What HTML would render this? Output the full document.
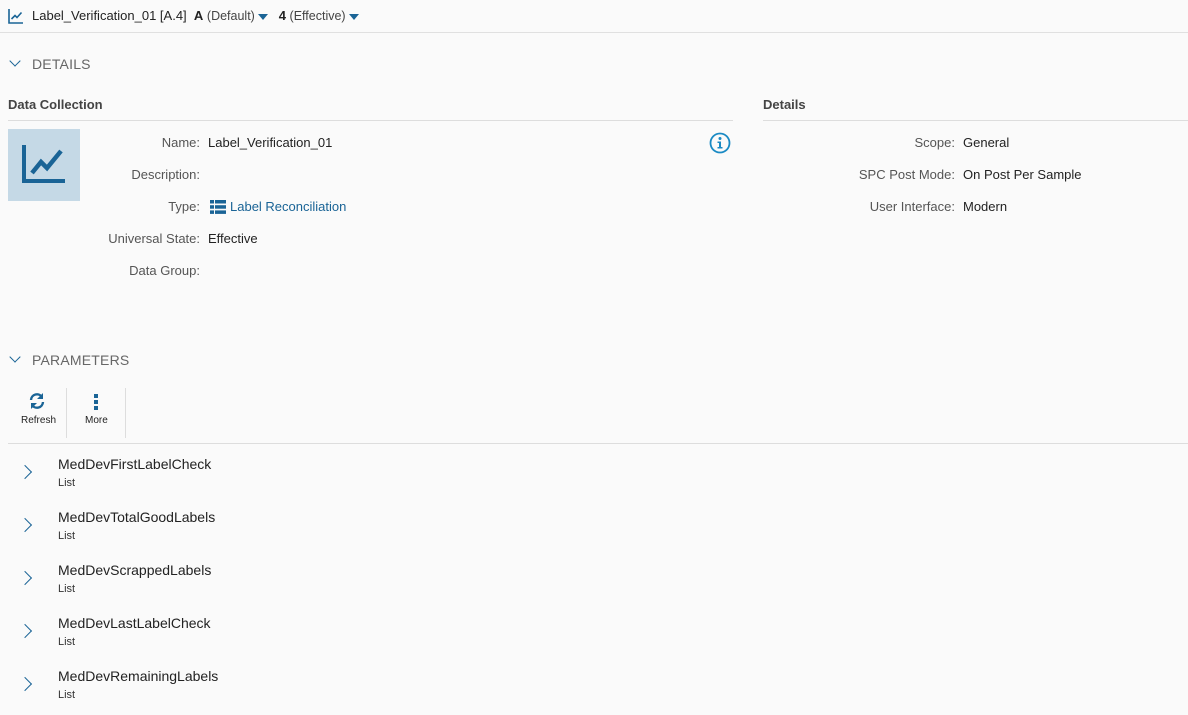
<!DOCTYPE html>
<html><head><style>
body{margin:0;width:1188px;height:715px;background:#fafafa;font-family:"Liberation Sans",sans-serif;color:#222;position:relative;overflow:hidden}
.a{position:absolute;white-space:nowrap}
.lbl{color:#555;font-size:13px;text-align:right;width:200px}
.val{font-size:13px;color:#222}
.blue{color:#1a6496}
.sec{color:#666;font-size:14px;letter-spacing:.2px}
.chev{position:absolute;width:7px;height:7px;border-right:1.5px solid #1a6496;border-bottom:1.5px solid #1a6496;transform:rotate(45deg)}
.rchev{position:absolute;width:9px;height:9px;border-right:1.8px solid #1a6496;border-top:1.8px solid #1a6496;transform:rotate(45deg)}
.pn{font-size:14px;color:#222}
.ps{font-size:11px;color:#333}
.tri{display:inline-block;width:0;height:0;border-left:5px solid transparent;border-right:5px solid transparent;border-top:6px solid #1a6496;vertical-align:middle;margin-left:3px}
</style></head><body>
<div class="a" style="left:0;top:0;width:1188px;height:32px;background:#fafafa;border-bottom:1px solid #e0e0e0"></div>
<svg class="a" style="left:8px;top:8px" width="16" height="16" viewBox="0 0 16 16"><path d="M1 1V15H15" fill="none" stroke="#1a6496" stroke-width="1.6"/><path d="M3.5 11L7 7.5L9 9.5L13.5 4.5" fill="none" stroke="#1a6496" stroke-width="1.6"/></svg>
<div class="a" style="left:32px;top:8px;font-size:13px">Label_Verification_01 [A.4]&nbsp;&nbsp;<b>A</b> <span style="color:#444;font-size:12.5px">(Default)</span><span class="tri"></span>&nbsp;&nbsp;&nbsp;<b>4</b> <span style="color:#444;font-size:12.5px">(Effective)</span><span class="tri"></span></div>

<div class="chev" style="left:11px;top:57px"></div>
<div class="a sec" style="left:32px;top:56px">DETAILS</div>
<div class="a" style="left:8px;top:97px;font-size:13px;font-weight:bold;color:#444">Data Collection</div>
<div class="a" style="left:8px;top:120px;width:725px;border-top:1px solid #ddd"></div>
<div class="a" style="left:763px;top:97px;font-size:13px;font-weight:bold;color:#444">Details</div>
<div class="a" style="left:763px;top:120px;width:425px;border-top:1px solid #ddd"></div>

<div class="a" style="left:8px;top:129px;width:72px;height:72px;background:#c5d9e6"></div>
<svg class="a" style="left:22px;top:142px" width="44" height="44" viewBox="0 0 44 44"><path d="M2 3V39H43" fill="none" stroke="#1a6496" stroke-width="4"/><path d="M10 31L19 20L25 26L39 9" fill="none" stroke="#1a6496" stroke-width="4.5"/></svg>

<div class="a lbl" style="left:0;top:135px">Name:</div><div class="a val" style="left:208px;top:135px">Label_Verification_01</div>
<div class="a lbl" style="left:0;top:167px">Description:</div>
<div class="a lbl" style="left:0;top:199px">Type:</div>
<svg class="a" style="left:210px;top:199px" width="16" height="16" viewBox="0 0 16 16" fill="#1a6496"><rect x="0" y="1" width="4" height="3.5"/><rect x="5" y="1" width="11" height="3.5"/><rect x="0" y="6.2" width="4" height="3.5"/><rect x="5" y="6.2" width="11" height="3.5"/><rect x="0" y="11.4" width="4" height="3.5"/><rect x="5" y="11.4" width="11" height="3.5"/></svg>
<div class="a val blue" style="left:230px;top:199px">Label Reconciliation</div>
<div class="a lbl" style="left:0;top:231px">Universal State:</div><div class="a val" style="left:208px;top:231px">Effective</div>
<div class="a lbl" style="left:0;top:263px">Data Group:</div>
<svg class="a" style="left:709px;top:132px" width="22" height="22" viewBox="0 0 22 22"><circle cx="11" cy="11" r="9.5" fill="none" stroke="#1a8ac4" stroke-width="1.8"/><circle cx="11" cy="6.5" r="1.5" fill="#1a8ac4"/><path d="M8.5 9.5H12V15H13.5V16.5H8.5V15H10V11H8.5Z" fill="#1a8ac4"/></svg>

<div class="a lbl" style="left:755px;top:135px">Scope:</div><div class="a val" style="left:963px;top:135px">General</div>
<div class="a lbl" style="left:755px;top:167px">SPC Post Mode:</div><div class="a val" style="left:963px;top:167px">On Post Per Sample</div>
<div class="a lbl" style="left:755px;top:199px">User Interface:</div><div class="a val" style="left:963px;top:199px">Modern</div>

<div class="chev" style="left:11px;top:353px"></div>
<div class="a sec" style="left:32px;top:352px">PARAMETERS</div>
<svg class="a" style="left:28px;top:392px" width="18" height="18" viewBox="0 0 18 18"><path d="M3 8A6 6 0 0 1 14 5" fill="none" stroke="#1a6496" stroke-width="2.4"/><path d="M15 1V7H9Z" fill="#1a6496"/><path d="M15 10A6 6 0 0 1 4 13" fill="none" stroke="#1a6496" stroke-width="2.4"/><path d="M3 17V11H9Z" fill="#1a6496"/></svg>
<div class="a" style="left:21px;top:415px;font-size:10px;color:#222">Refresh</div>
<div class="a" style="left:66px;top:388px;height:50px;border-left:1px solid #ddd"></div>
<div class="a" style="left:94px;top:394px;width:4px;height:4px;background:#1a6496;box-shadow:0 6px 0 #1a6496,0 12px 0 #1a6496"></div>
<div class="a" style="left:85px;top:415px;font-size:10px;color:#222">More</div>
<div class="a" style="left:125px;top:388px;height:50px;border-left:1px solid #ddd"></div>
<div class="a" style="left:8px;top:443px;width:1180px;border-top:1px solid #ddd"></div>

<div class="rchev" style="left:20px;top:467px"></div><div class="a pn" style="left:58px;top:456px">MedDevFirstLabelCheck</div><div class="a ps" style="left:58px;top:477px">List</div>
<div class="rchev" style="left:20px;top:520px"></div><div class="a pn" style="left:58px;top:509px">MedDevTotalGoodLabels</div><div class="a ps" style="left:58px;top:530px">List</div>
<div class="rchev" style="left:20px;top:573px"></div><div class="a pn" style="left:58px;top:562px">MedDevScrappedLabels</div><div class="a ps" style="left:58px;top:583px">List</div>
<div class="rchev" style="left:20px;top:626px"></div><div class="a pn" style="left:58px;top:615px">MedDevLastLabelCheck</div><div class="a ps" style="left:58px;top:636px">List</div>
<div class="rchev" style="left:20px;top:679px"></div><div class="a pn" style="left:58px;top:668px">MedDevRemainingLabels</div><div class="a ps" style="left:58px;top:689px">List</div>
</body></html>
